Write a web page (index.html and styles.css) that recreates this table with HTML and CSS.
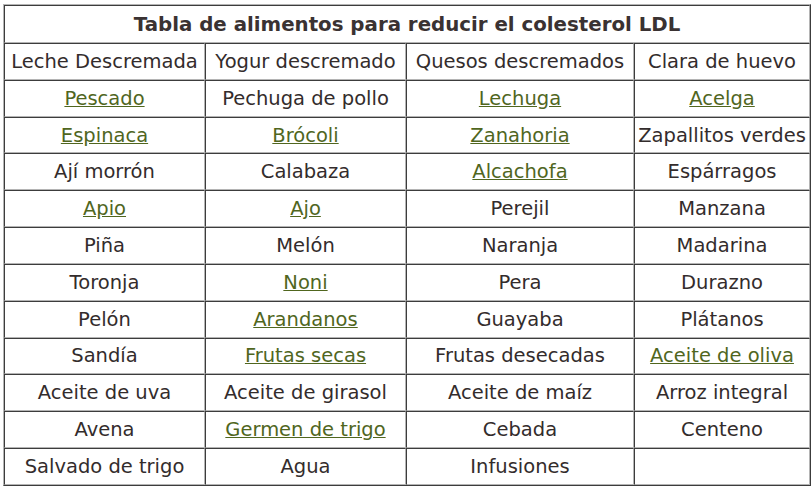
FILE: index.html
```html
<!DOCTYPE html>
<html lang="es">
<head>
<meta charset="utf-8">
<title>Tabla de alimentos</title>
<link rel="stylesheet" href="styles.css">
</head>
<body>
<table class="foods">
  <colgroup>
    <col class="c1"><col class="c2"><col class="c3"><col class="c4">
  </colgroup>
  <tr class="head"><th colspan="4">Tabla de alimentos para reducir el colesterol LDL</th></tr>
  <tr><td>Leche Descremada</td><td>Yogur descremado</td><td>Quesos descremados</td><td>Clara de huevo</td></tr>
  <tr><td><a href="#">Pescado</a></td><td>Pechuga de pollo</td><td><a href="#">Lechuga</a></td><td><a href="#">Acelga</a></td></tr>
  <tr><td><a href="#">Espinaca</a></td><td><a href="#">Brócoli</a></td><td><a href="#">Zanahoria</a></td><td>Zapallitos verdes</td></tr>
  <tr><td>Ají morrón</td><td>Calabaza</td><td><a href="#">Alcachofa</a></td><td>Espárragos</td></tr>
  <tr><td><a href="#">Apio</a></td><td><a href="#">Ajo</a></td><td>Perejil</td><td>Manzana</td></tr>
  <tr><td>Piña</td><td>Melón</td><td>Naranja</td><td>Madarina</td></tr>
  <tr><td>Toronja</td><td><a href="#">Noni</a></td><td>Pera</td><td>Durazno</td></tr>
  <tr><td>Pelón</td><td><a href="#">Arandanos</a></td><td>Guayaba</td><td>Plátanos</td></tr>
  <tr><td>Sandía</td><td><a href="#">Frutas secas</a></td><td>Frutas desecadas</td><td><a href="#">Aceite de oliva</a></td></tr>
  <tr><td>Aceite de uva</td><td>Aceite de girasol</td><td>Aceite de maíz</td><td>Arroz integral</td></tr>
  <tr><td>Avena</td><td><a href="#">Germen de trigo</a></td><td>Cebada</td><td>Centeno</td></tr>
  <tr><td>Salvado de trigo</td><td>Agua</td><td>Infusiones</td><td></td></tr>
</table>
</body>
</html>
```
FILE: styles.css
```css
html, body {
  margin: 0;
  padding: 0;
  background: #ffffff;
}
body {
  padding: 4px 3px 0 3px;
  font-family: "DejaVu Sans", Verdana, sans-serif;
  color: #332c2c;
}
.foods {
  width: 806px;
  border-collapse: separate;
  border-spacing: 0;
  table-layout: fixed;
  border-style: solid;
  border-width: 1px;
  border-color: #b4b4b4 #3c3c3c #3c3c3c #b4b4b4;
}
.c1 { width: 201px; }
.c2 { width: 201px; }
.c3 { width: 228px; }
.c4 { width: 176px; }
.foods th,
.foods td {
  border-style: solid;
  border-width: 1px;
  border-color: #3c3c3c #b4b4b4 #b4b4b4 #3c3c3c;
  padding: 0;
  text-align: center;
  white-space: nowrap;
  overflow: hidden;
  font-size: 19.5px;
  height: 34.82px;
}
.head th {
  font-weight: bold;
  font-size: 19.8px;
  height: 36px;
  color: #3a3232;
}
.foods a {
  color: #50661e;
  text-decoration: underline;
}
```
